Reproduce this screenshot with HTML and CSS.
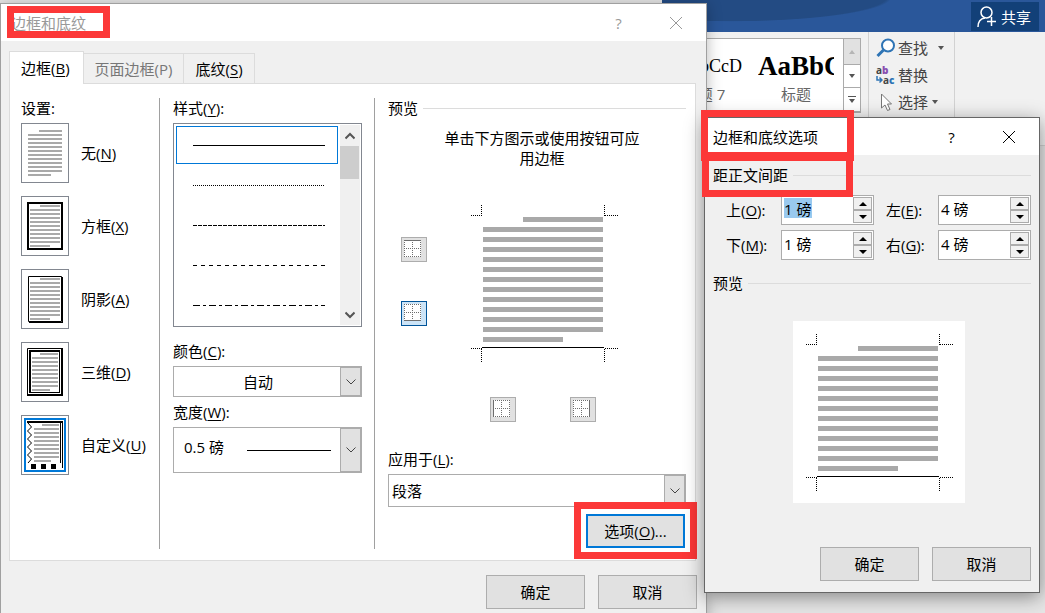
FILE: index.html
```html
<!DOCTYPE html>
<html lang="zh-CN">
<head>
<meta charset="utf-8">
<title>边框和底纹</title>
<link rel="stylesheet" href="styles.css">
</head>
<body>
<svg class="defs" aria-hidden="true">
  <symbol id="sample" viewBox="0 0 148 158">
    <path d="M53 15.500H133M13 135.500H93" stroke="#a9a9a9" stroke-width="5"/>
    <path d="M73 23V128" stroke="#a9a9a9" stroke-width="120" stroke-dasharray="5 5"/>
    <path d="M11.500 1V12M134.500 1V12M1 11.500H12M135 11.500H148M1 144.500H12M135 144.500H148M11.500 145V158M134.500 145V158" stroke="#000" stroke-dasharray="1 1"/>
    <path d="M12 143.500H134" stroke="#000"/>
  </symbol>
  <symbol id="down" viewBox="0 0 12 8"><path d="M1.500 1.500L6 6L10.500 1.500" fill="none" stroke="#444"/></symbol>
  <symbol id="grid" viewBox="0 0 17 17">
    <path d="M0 0H17V17H0Z" fill="#fff"/>
    <path d="M0 .5H17M0 8.500H17M0 16.500H17M.5 0V17M8.500 0V17M16.500 0V17" stroke="#6e6e6e" stroke-dasharray="1 1"/>
  </symbol>
  <symbol id="cross" viewBox="0 0 14 14"><path d="M1 1L13 13M13 1L1 13" stroke="currentColor" fill="none"/></symbol>
</svg>

<main class="desktop">
  <header class="titlebar">
    <button class="share"><svg width="20" height="22" viewBox="0 0 20 22" fill="none" stroke="#fff" stroke-width="1.500"><circle cx="9.500" cy="6.500" r="5.500"/><path d="M1 21C1 15 4 12.500 8 12M14.500 11V20M10 15.500H19"/></svg>共享</button>
  </header>
  <section class="ribbon">
    <div class="gallery">
      <div class="style"><span class="style-sample right">AaBbCcD</span><span class="style-name">标题 7</span></div>
      <div class="style"><span class="style-sample big">AaBbC</span><span class="style-name">标题</span></div>
      <div class="gallery-nav">
        <button class="off" aria-label="上一行"><svg width="6" height="4"><path d="M0 4L3 0L6 4Z" fill="#b5b5b5"/></svg></button>
        <button aria-label="下一行"><svg width="6" height="4"><path d="M0 0L3 4L6 0Z" fill="#555"/></svg></button>
        <button aria-label="其他"><svg width="8" height="7"><path d="M0 .5H8" stroke="#555"/><path d="M1 3L4 7L7 3Z" fill="#555"/></svg></button>
      </div>
    </div>
    <div class="editing">
      <button class="cmd"><svg width="20" height="20" viewBox="0 0 20 20" fill="none" stroke="#2e74b5"><circle cx="12" cy="7.500" r="6" fill="#fff" stroke-width="2"/><path d="M7.500 12L1.500 18" stroke-width="3"/></svg>查找<svg class="caret wide" width="6" height="4"><path d="M0 0L3 4L6 0Z" fill="#555"/></svg></button>
      <button class="cmd"><span class="letters"><span>a<b class="purple">b</b></span><span class="letters-low"><svg width="7" height="8" viewBox="0 0 7 8"><path d="M1 0V4H5.500M3.500 1.500L6 4L3.500 6.500" fill="none" stroke="#2e74b5" stroke-width="1.500"/></svg>a<b class="blue">c</b></span></span>替换</button>
      <button class="cmd"><svg width="20" height="20" viewBox="0 0 20 20"><path d="M5.500 2V16L9 13L11.500 18.500L14 17.500L11.500 12H15.500Z" fill="#fff" stroke="#777"/></svg>选择<svg class="caret" width="6" height="4"><path d="M0 0L3 4L6 0Z" fill="#555"/></svg></button>
    </div>
  </section>
  <div class="document"></div>

  <section class="dialog borders" aria-label="边框和底纹">
    <header class="caption inactive">
      <h1>边框和底纹</h1>
      <button aria-label="帮助">?</button>
      <button aria-label="关闭"><svg width="14" height="14"><use href="#cross"/></svg></button>
    </header>
    <span class="mark mark-title"></span>
    <div class="borders-body">
      <nav class="tabs" role="tablist">
        <button class="tab current" role="tab">边框(<u>B</u>)</button>
        <button class="tab dim" role="tab">页面边框(P)</button>
        <button class="tab" role="tab">底纹(<u>S</u>)</button>
      </nav>
      <div class="panel">
        <div class="col settings">
          <div class="label">设置:</div>
          <div class="setting">
            <button class="thumb" id="s-none"><svg width="46" height="58" viewBox="1 1 46 58"><path d="M18 8H41M7 52H30" stroke="#a9a9a9" stroke-width="2"/><path d="M24 11V49" stroke="#a9a9a9" stroke-width="34" stroke-dasharray="2 2"/></svg></button>
            <label for="s-none">无(<u>N</u>)</label>
          </div>
          <div class="setting">
            <button class="thumb" id="s-box"><svg width="46" height="58" viewBox="1 1 46 58"><path d="M7 7H41V53H7Z" fill="none" stroke="#000" stroke-width="2"/><path d="M19 10H39M9 50H29" stroke="#a9a9a9" stroke-width="2"/><path d="M24 13V47" stroke="#a9a9a9" stroke-width="30" stroke-dasharray="2 2"/></svg></button>
            <label for="s-box">方框(<u>X</u>)</label>
          </div>
          <div class="setting">
            <button class="thumb" id="s-shadow"><svg width="46" height="58" viewBox="1 1 46 58"><path d="M7.500 7.500H40.500V52.500H7.500Z" fill="none" stroke="#000"/><path d="M41.500 8V54M8 53.500H42" stroke="#000"/><path d="M19 10H39M9 50H29" stroke="#a9a9a9" stroke-width="2"/><path d="M24 13V47" stroke="#a9a9a9" stroke-width="30" stroke-dasharray="2 2"/></svg></button>
            <label for="s-shadow">阴影(<u>A</u>)</label>
          </div>
          <div class="setting">
            <button class="thumb" id="s-3d"><svg width="46" height="58" viewBox="1 1 46 58"><path d="M6.500 54V6.500H42" fill="none" stroke="#000"/><path d="M41 6V54M6 53H42" stroke="#000" stroke-width="2"/><path d="M9 51V9H39" fill="none" stroke="#000" stroke-width="2"/><path d="M38.500 8V51M8 50.500H39" stroke="#000"/><path d="M19 12H37M11 48H29" stroke="#a9a9a9" stroke-width="2"/><path d="M24 15V45" stroke="#a9a9a9" stroke-width="26" stroke-dasharray="2 2"/></svg></button>
            <label for="s-3d">三维(<u>D</u>)</label>
          </div>
          <div class="setting">
            <button class="thumb" id="s-custom"><svg width="46" height="58" viewBox="1 1 46 58"><path d="M4 4H44V56H4Z" fill="#fff" stroke="#0078d7" stroke-width="2"/><path d="M6 7H42" stroke="#000" stroke-width="2"/><path d="M39.500 8V48M41.500 8V53" stroke="#000"/><path d="M7 8L10.500 12L6.500 16L10.500 20L6.500 24L10.500 28L6.500 32L10.500 36L6.500 40L10.500 44L7 48" fill="none" stroke="#000"/><path d="M10 51.500H35" stroke="#000" stroke-width="5" stroke-dasharray="5 5"/><path d="M21 10H38M13 46H30" stroke="#a9a9a9" stroke-width="2"/><path d="M25.500 13V43" stroke="#a9a9a9" stroke-width="25" stroke-dasharray="2 2"/></svg></button>
            <label for="s-custom">自定义(<u>U</u>)</label>
          </div>
        </div>

        <div class="col line-style">
          <div class="label" id="l-style">样式(<u>Y</u>):</div>
          <div class="list">
            <ul role="listbox" aria-labelledby="l-style">
              <li class="picked" role="option" aria-selected="true"><svg width="132" height="1"><path d="M0 .5H132" stroke="#000"/></svg></li>
              <li role="option"><svg width="132" height="1"><path d="M0 .5H132" stroke="#000" stroke-dasharray="1 1"/></svg></li>
              <li role="option"><svg width="132" height="1"><path d="M0 .5H132" stroke="#000" stroke-dasharray="4 1"/></svg></li>
              <li role="option"><svg width="132" height="1"><path d="M0 .5H132" stroke="#000" stroke-dasharray="4 4"/></svg></li>
              <li role="option"><svg width="132" height="1"><path d="M0 .5H132" stroke="#000" stroke-dasharray="7 3 3 3"/></svg></li>
            </ul>
            <div class="scroll">
              <button aria-label="向上"><svg width="10" height="8" fill="none" stroke="#555" stroke-width="2"><path d="M.5 6.500L5 2L9.500 6.500"/></svg></button>
              <span class="scroll-thumb"></span>
              <button class="scroll-end" aria-label="向下"><svg width="10" height="8" fill="none" stroke="#555" stroke-width="2"><path d="M.5 1.500L5 6L9.500 1.500"/></svg></button>
            </div>
          </div>
          <label class="label spaced" for="color">颜色(<u>C</u>):</label>
          <div class="combo centered"><select id="color"><option>自动</option></select><span class="combo-arrow"><svg width="12" height="8"><use href="#down"/></svg></span></div>
          <label class="label near" for="width">宽度(<u>W</u>):</label>
          <div class="combo tall"><select id="width"><option>0.5 磅</option></select><svg class="rule" width="84" height="1"><path d="M0 .5H84" stroke="#000"/></svg><span class="combo-arrow"><svg width="12" height="8"><use href="#down"/></svg></span></div>
        </div>

        <div class="col preview">
          <div class="group">预览</div>
          <p class="hint">单击下方图示或使用按钮可应用边框</p>
          <div class="stage">
            <div class="side">
              <button class="edge" aria-label="上框线"><svg width="17" height="17"><use href="#grid"/><path d="M0 .5H17" stroke="#6e6e6e"/></svg></button>
              <button class="edge on" aria-label="下框线"><svg width="17" height="17"><use href="#grid"/><path d="M0 16.500H17" stroke="#6e6e6e"/></svg></button>
            </div>
            <svg width="148" height="158"><use href="#sample"/></svg>
            <div class="under">
              <button class="edge" aria-label="左框线"><svg width="17" height="17"><use href="#grid"/><path d="M.5 0V17" stroke="#6e6e6e"/></svg></button>
              <button class="edge" aria-label="右框线"><svg width="17" height="17"><use href="#grid"/><path d="M16.500 0V17" stroke="#6e6e6e"/></svg></button>
            </div>
          </div>
          <label class="label apply" for="apply">应用于(<u>L</u>):</label>
          <div class="combo mid"><select id="apply"><option>段落</option></select><span class="combo-arrow"><svg width="12" height="8"><use href="#down"/></svg></span></div>
          <div class="options-row">
            <button class="btn focus">选项(<u>O</u>)...</button>
            <span class="mark mark-options"></span>
          </div>
        </div>
      </div>
      <footer class="actions"><button class="btn">确定</button><button class="btn">取消</button></footer>
    </div>
  </section>

  <section class="dialog options" aria-label="边框和底纹选项">
    <header class="caption">
      <h2>边框和底纹选项</h2>
      <button aria-label="帮助">?</button>
      <button aria-label="关闭"><svg width="14" height="14"><use href="#cross"/></svg></button>
    </header>
    <div class="options-body">
      <div class="group">距正文间距</div>
      <div class="fields">
        <label for="top">上(<u>O</u>):</label>
        <div class="spin"><input class="marked" id="top" value="1 磅"><span class="steps"><button aria-label="增加"><svg width="8" height="4"><path d="M0 4L4 0L8 4Z"/></svg></button><button aria-label="减少"><svg width="8" height="4"><path d="M0 0L4 4L8 0Z"/></svg></button></span></div>
        <label class="second" for="left">左(<u>E</u>):</label>
        <div class="spin"><input id="left" value="4 磅"><span class="steps"><button aria-label="增加"><svg width="8" height="4"><path d="M0 4L4 0L8 4Z"/></svg></button><button aria-label="减少"><svg width="8" height="4"><path d="M0 0L4 4L8 0Z"/></svg></button></span></div>
        <label for="bottom">下(<u>M</u>):</label>
        <div class="spin"><input id="bottom" value="1 磅"><span class="steps"><button aria-label="增加"><svg width="8" height="4"><path d="M0 4L4 0L8 4Z"/></svg></button><button aria-label="减少"><svg width="8" height="4"><path d="M0 0L4 4L8 0Z"/></svg></button></span></div>
        <label class="second" for="right">右(<u>G</u>):</label>
        <div class="spin"><input id="right" value="4 磅"><span class="steps"><button aria-label="增加"><svg width="8" height="4"><path d="M0 4L4 0L8 4Z"/></svg></button><button aria-label="减少"><svg width="8" height="4"><path d="M0 0L4 4L8 0Z"/></svg></button></span></div>
      </div>
      <div class="group">预览</div>
      <div class="paper"><svg width="148" height="158"><use href="#sample"/></svg></div>
      <div class="options-actions"><button class="btn">确定</button><button class="btn">取消</button></div>
    </div>
    <span class="mark mark-caption"></span>
    <span class="mark mark-group"></span>
  </section>
</main>
</body>
</html>
```

FILE: styles.css
```css
* { box-sizing: border-box; }
body, button, input, select {
  font-family: "Open Sans", "Noto Sans CJK SC", sans-serif;
  font-size: 15px;
  line-height: 20px;
  color: #000;
}
body { margin: 0; overflow: hidden; background: #e6e6e6; }
button { margin: 0; padding: 0; border: 0; background: none; }
svg { display: block; flex: none; }
u { text-underline-offset: 2px; text-decoration-thickness: 1px; text-decoration-skip-ink: none; }
h1, h2, p, ul { margin: 0; padding: 0; font-size: 15px; font-weight: 400; }
.defs { display: none; }

/* Editor window behind the dialogs */
.desktop { position: relative; display: flex; flex-direction: column; height: 100vh; overflow: hidden; }
.titlebar {
  display: flex;
  justify-content: flex-end;
  align-self: flex-end;
  width: 383px;
  height: 32px;
  padding: 2px 6px 1px 0;
  background: radial-gradient(ellipse 260px 40px at 18% -10%, #234b83 0 60%, transparent 62%) #2a579a;
}
.share { display: flex; align-items: center; gap: 4px; padding: 0 8px 0 6px; background: #124078; color: #fff; }
.ribbon {
  display: flex;
  justify-content: flex-end;
  height: 114px;
  padding-right: 90px;
  border-bottom: 1px solid #d2d2d2;
  background: #f1f1f1;
}
.gallery { display: flex; height: 75px; margin: 6px 7px 0 0; border: 1px solid #ababab; background: #fff; }
.style { display: flex; flex-direction: column; width: 92px; padding: 0 9px 0 7px; }
.style-sample {
  display: flex;
  align-items: center;
  height: 46px;
  margin: 4px 0;
  overflow: hidden;
  font: 18px/26px "Liberation Serif", serif;
}
.style-sample.right { justify-content: flex-end; }
.style-sample.big { font-size: 27px; font-weight: 700; }
.style-name { margin-top: -9px; text-align: center; color: #666; }
.gallery-nav { display: grid; grid-template-rows: 26px 23px 24px; width: 17px; }
.gallery-nav button { display: grid; place-items: center; border-left: 1px solid #ababab; border-bottom: 1px solid #ababab; }
.gallery-nav .off { background: #e1e1e1; }
.editing {
  display: flex;
  flex-direction: column;
  gap: 7px;
  width: 87px;
  padding: 6px 0 0 7px;
  border: solid #d2d2d2;
  border-width: 0 1px;
}
.cmd { display: flex; align-items: center; gap: 2px; height: 20px; color: #444; }
.caret { margin-left: 2px; }
.caret.wide { margin-left: 8px; }
.letters { display: flex; flex-direction: column; width: 20px; font-size: 10px; line-height: 10px; font-weight: 700; text-align: left; }
.letters-low { display: flex; align-items: center; }
.purple { color: #8a4fb0; }
.blue { color: #2e74b5; }
.document { flex: 1; background: #e6e6e6; }

/* Dialog windows */
.dialog { position: absolute; border: 1px solid #a0a0a0; background: #f0f0f0; }
.borders { top: 3px; left: 0; right: 338px; box-shadow: 0 2px 14px rgba(0, 0, 0, .28); }
.options { top: 117px; right: 5px; width: 336px; border-color: #666; box-shadow: 0 4px 18px rgba(0, 0, 0, .42); }
.caption { display: flex; align-items: center; height: 37px; padding: 0 2px 0 8px; background: #fff; }
.caption h1, .caption h2 { flex: 1; }
.caption button { display: grid; place-items: center; width: 57px; height: 36px; }
.caption.inactive { padding-left: 10px; }
.caption.inactive, .caption.inactive button { color: #999; }
.borders-body { padding: 10px 9px 14px 8px; }
.tabs { display: flex; align-items: flex-end; }
.tab { height: 30px; margin-left: -1px; padding: 0 11px; border: 1px solid #dcdcdc; border-bottom: 0; }
.tab.current { position: relative; height: 33px; margin: 0 0 -1px; padding: 0 13px 0 11px; background: #fff; }
.tab.dim { color: #777; }
.panel {
  display: flex;
  margin-right: 1px;
  padding: 14px 9px 11px 11px;
  border: 1px solid #dcdcdc;
  background: #fff;
}
.col { display: flex; flex-direction: column; }
.settings { width: 139px; border-right: 1px solid #a0a0a0; }
.line-style { width: 215px; padding: 0 12px 0 13px; border-right: 1px solid #a0a0a0; }
.preview { flex: 1; padding-left: 13px; }
.label { display: block; margin-bottom: 5px; }
.setting { display: flex; align-items: center; gap: 12px; margin-bottom: 13px; }
.thumb { border: 1px solid #828790; background: #fff; }

.list { display: flex; height: 204px; padding: 1px; border: 1px solid #828790; }
.list ul { flex: 1; list-style: none; padding: 1px; }
.list li { display: flex; align-items: center; height: 38px; margin: 0 1px 2px 0; padding-left: 17px; }
.list .picked { padding-left: 16px; border: 1px solid #0078d7; }
.scroll { display: flex; flex-direction: column; width: 20px; background: #f0f0f0; }
.scroll button { display: grid; place-items: center; height: 21px; }
.scroll-thumb { height: 33px; margin-right: 1px; background: #cdcdcd; }
.scroll .scroll-end { margin-top: auto; }
.label.spaced { margin: 14px 0 5px; }
.label.near { margin: 5px 0; }

.combo { display: grid; grid-template-columns: 1fr auto 21px; align-items: center; height: 31px; border: 1px solid #acacac; background: #fff; }
.combo.mid { height: 33px; }
.combo.tall { height: 46px; }
.combo select {
  grid-area: 1 / 1 / 2 / 4;
  width: 100%;
  height: 100%;
  padding: 0 22px 0 3px;
  border: 0;
  appearance: none;
  background: transparent;
}
.combo.centered select { text-align-last: center; }
.combo.tall select { padding: 0 0 6px 10px; }
.rule { grid-area: 1 / 2; margin-right: 9px; pointer-events: none; }
.combo-arrow {
  grid-area: 1 / 3;
  display: grid;
  place-items: center;
  height: 100%;
  border: 1px solid #acacac;
  background: #e1e1e1;
  pointer-events: none;
}

.group { display: flex; align-items: center; gap: 5px; }
.group::after { content: ""; flex: 1; height: 1px; background: #dcdcdc; }
.hint { align-self: center; width: 210px; margin-top: 10px; padding-left: 10px; text-align: center; }
.stage { display: grid; grid-template-columns: 26px 148px; justify-content: start; gap: 35px 43px; margin-top: 36px; padding-left: 13px; }
.side { display: flex; flex-direction: column; gap: 39px; padding-top: 33px; }
.under { grid-column: 2; display: flex; gap: 54px; padding-left: 20px; }
.edge { width: 26px; height: 25px; padding: 2px; border: 1px solid #adadad; background: #e1e1e1; }
.edge svg { margin-bottom: 3px; }
.edge.on { border-color: #005499; background: #cce4f7; }
.label.apply { margin: 27px 0 5px; }
.btn { width: 99px; height: 34px; border: 1px solid #adadad; background: #e1e1e1; }
.btn.focus { border: 2px solid #0078d7; }
.options-row { position: relative; display: flex; justify-content: flex-end; padding: 7px 1px 1px 0; }
.actions { display: flex; justify-content: flex-end; gap: 13px; padding-top: 14px; }

.options-body { padding: 10px 8px 11px; }
.fields {
  display: grid;
  grid-template-columns: 55px minmax(0, 1fr) 64px minmax(0, 1fr);
  gap: 5px 0;
  align-items: center;
  margin: 10px 0 13px;
  padding-left: 13px;
}
.fields .second { padding-left: 12px; }
.spin { display: flex; height: 30px; padding: 1px; border: 1px solid #acacac; background: #fff; }
.spin input { flex: 1; min-width: 0; height: 22px; padding: 0 0 0 1px; border: 0; outline: 0; background: transparent; }
.spin .marked { background: linear-gradient(#99c9ef, #99c9ef) 1px 1px / 28px 20px no-repeat; }
.steps { display: grid; grid-template-rows: 1fr 1fr; width: 19px; }
.steps button { display: grid; place-items: center; border: 1px solid #acacac; background: #f0f0f0; }
.paper { width: fit-content; margin: 28px 66px 44px auto; padding: 12px; background: #fff; }
.options-actions { display: flex; justify-content: flex-end; gap: 13px; }

/* Red call-outs over the dialogs */
.mark { position: absolute; border: 7px solid #fc3838; pointer-events: none; }
.mark-title { top: 2px; left: 6px; width: 103px; height: 32px; }
.mark-options { top: -5px; right: -11px; width: 123px; height: 57px; }
.mark-caption { top: -8px; left: -4px; width: 153px; height: 51px; border-bottom-width: 9px; }
.mark-group { top: 36px; left: -3px; width: 151px; height: 43px; }
```
